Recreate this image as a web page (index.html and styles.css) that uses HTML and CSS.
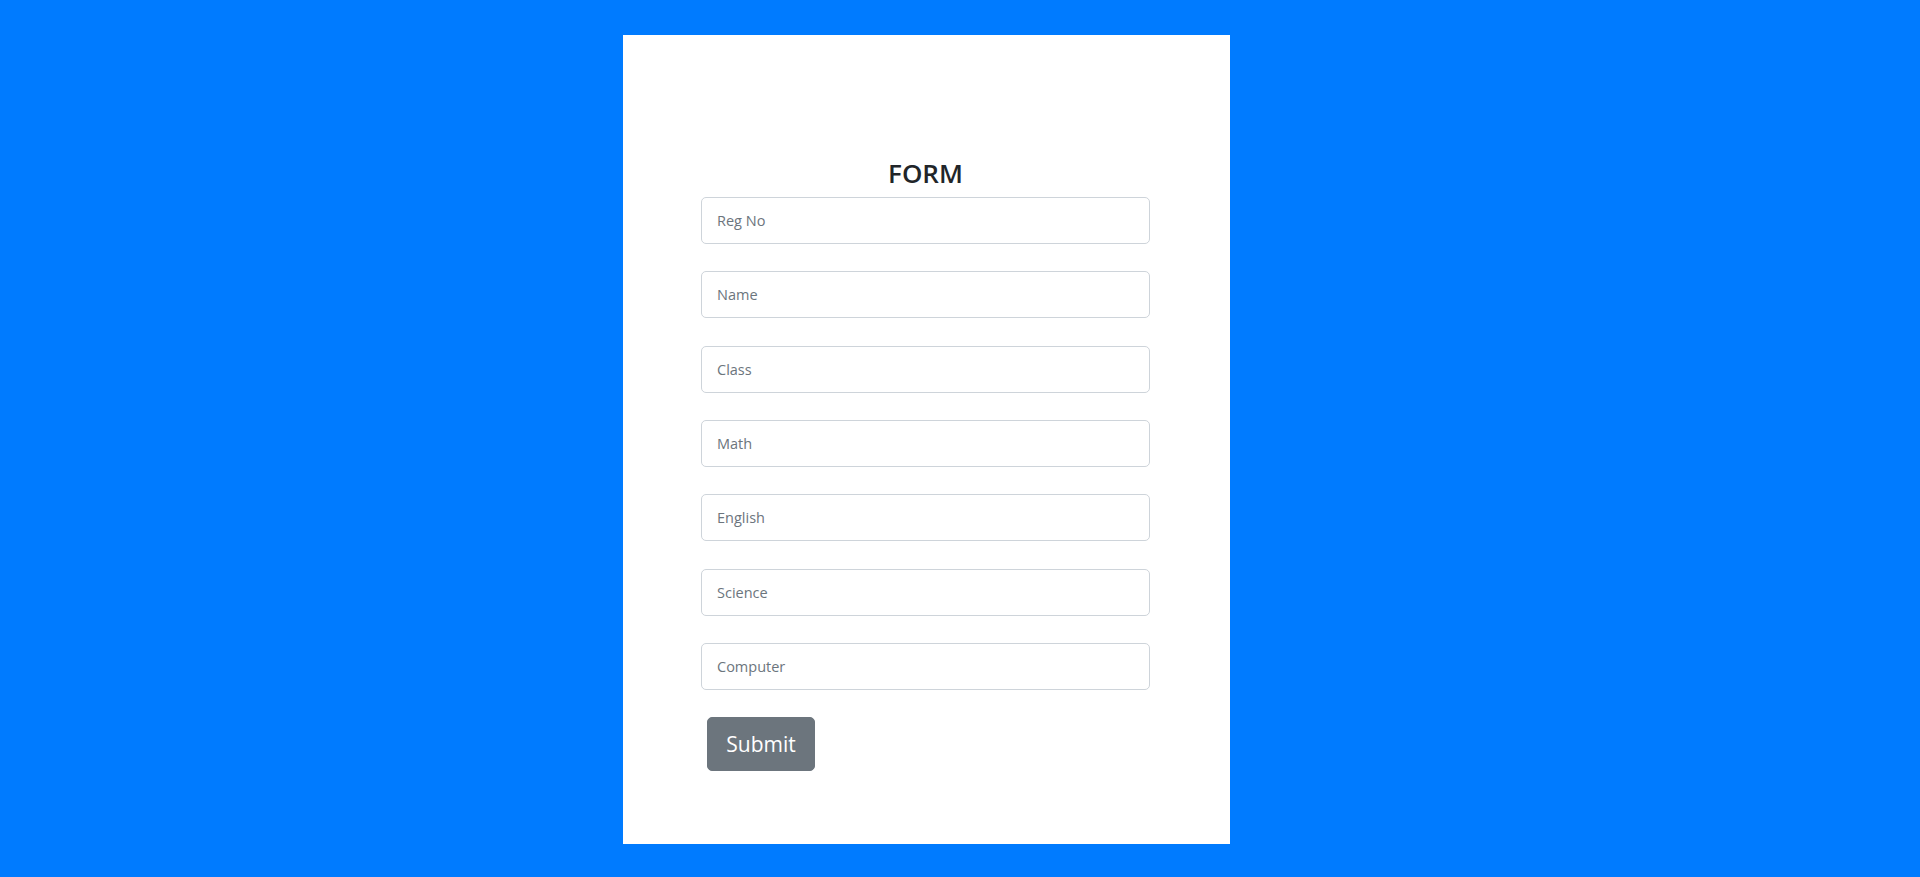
FILE: index.html
```html
<!DOCTYPE html>
<html lang="en">
<head>
<meta charset="utf-8">
<title>Form</title>
<link rel="stylesheet" href="styles.css">
</head>
<body>
<div class="page">
  <div class="card">
    <h2 class="title">FORM</h2>
    <form class="form">
      <input class="field" type="text" placeholder="Reg No">
      <input class="field" type="text" placeholder="Name">
      <input class="field" type="text" placeholder="Class">
      <input class="field" type="text" placeholder="Math">
      <input class="field" type="text" placeholder="English">
      <input class="field" type="text" placeholder="Science">
      <input class="field" type="text" placeholder="Computer">
      <div class="actions">
        <button class="btn" type="button">Submit</button>
      </div>
    </form>
  </div>
</div>
</body>
</html>
```

FILE: styles.css
```css
html, body {
  margin: 0;
  padding: 0;
}
body {
  background: #007bff;
  height: 877px;
  overflow: hidden;
  font-family: "Open Sans", "Noto Sans", sans-serif;
  color: #212529;
}
.page {
  display: flex;
  padding: 35px 0 0 623px;
}
.card {
  width: 607px;
  height: 809px;
  background: #fff;
  box-sizing: border-box;
  padding: 123px 80px 0 78px;
}
.title {
  margin: 0 0 8px 0;
  text-align: center;
  font-size: 26px;
  line-height: 1.2;
  font-weight: 600;
  color: #212529;
}
.form {
  display: flex;
  flex-direction: column;
  gap: 27.3px;
}
.field {
  display: block;
  box-sizing: border-box;
  width: 449px;
  height: 47px;
  margin: 0;
  padding: 0 15px;
  border: 1px solid #ced4da;
  border-radius: 5px;
  background: #fff;
  font-family: "Open Sans", "Noto Sans", sans-serif;
  font-size: 14.5px;
  color: #495057;
  outline: none;
}
.field::placeholder {
  color: #6c757d;
  opacity: 1;
}
.actions {
  display: flex;
  padding-left: 6px;
}
.btn {
  box-sizing: border-box;
  height: 54px;
  width: 108px;
  padding: 0;
  border: 1px solid #6c757d;
  border-radius: 5px;
  background: #6c757d;
  color: #fff;
  font-family: "Open Sans", "Noto Sans", sans-serif;
  font-size: 21px;
  cursor: pointer;
}
```
